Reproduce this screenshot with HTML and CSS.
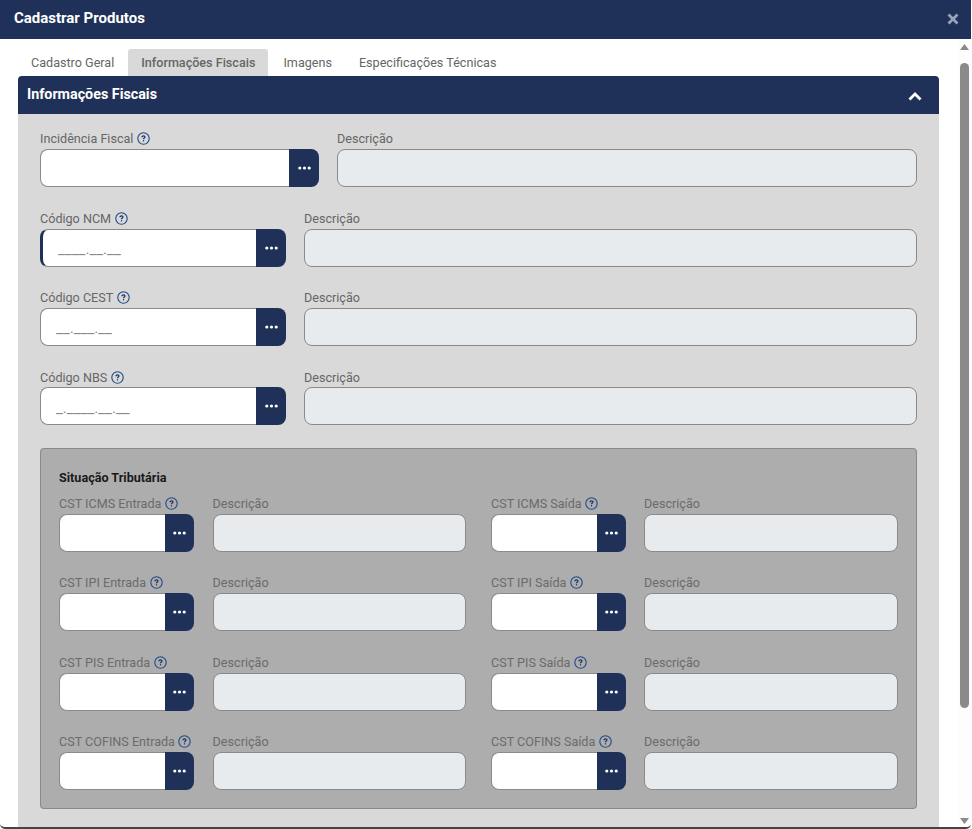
FILE: index.html
```html
<!DOCTYPE html>
<html lang="pt-BR">
<head>
<meta charset="utf-8">
<title>Cadastrar Produtos</title>
<link rel="stylesheet" href="styles.css">
</head>
<body>
<svg class="defs" width="0" height="0" aria-hidden="true">
  <symbol id="help" viewBox="0 0 13 13">
    <circle cx="6.5" cy="6.5" r="5.7" fill="none" stroke="#1f4a8a" stroke-width="1.1"/>
    <path d="M5 5.2C5 4.4 5.6 3.9 6.5 3.9C7.4 3.9 8 4.4 8 5.1C8 6.1 6.5 6.1 6.5 7.3" fill="none" stroke="#1f3158" stroke-width="1.2"/>
    <rect x="5.9" y="8.2" width="1.2" height="1.2" fill="#1f3158"/>
  </symbol>
  <symbol id="dots" viewBox="0 0 13 4">
    <circle cx="1.8" cy="2" r="1.6" fill="#fff"/>
    <circle cx="6.5" cy="2" r="1.6" fill="#fff"/>
    <circle cx="11.2" cy="2" r="1.6" fill="#fff"/>
  </symbol>
</svg>
<div class="modal">
  <header class="modal-head">
    <h1 class="modal-title">Cadastrar Produtos</h1>
    <svg class="close" width="12" height="12" viewBox="0 0 12 12"><path d="M1.5 1.5L10.5 10.5M10.5 1.5L1.5 10.5" stroke="#98a2b8" stroke-width="2.8"/></svg>
  </header>
  <div class="modal-body">
    <div class="content">
      <nav class="tabs">
        <span class="tab">Cadastro Geral</span>
        <span class="tab tab-active">Informações Fiscais</span>
        <span class="tab">Imagens</span>
        <span class="tab">Especificações Técnicas</span>
      </nav>
      <section class="panel">
        <div class="panel-head">
          <h2 class="panel-title">Informações Fiscais</h2>
          <svg class="chevron" width="14" height="9" viewBox="0 0 14 9"><path d="M1.5 7.5L7 2L12.5 7.5" fill="none" stroke="#fff" stroke-width="2.8"/></svg>
        </div>
        <div class="panel-body">
          <div class="row row-first">
            <div class="field code"><label class="label">Incidência Fiscal<svg class="help"><use href="#help"/></svg></label><div class="lookup"><span class="input"></span><span class="btn"><svg class="dots"><use href="#dots"/></svg></span></div></div>
            <div class="field desc"><label class="label">Descrição</label><span class="ro"></span></div>
          </div>
          <div class="row">
            <div class="field code"><label class="label">Código NCM<svg class="help"><use href="#help"/></svg></label><div class="lookup"><span class="input input-focus"><span class="mask mask-ncm">____.__.__</span></span><span class="btn"><svg class="dots"><use href="#dots"/></svg></span></div></div>
            <div class="field desc"><label class="label">Descrição</label><span class="ro"></span></div>
          </div>
          <div class="row">
            <div class="field code"><label class="label">Código CEST<svg class="help"><use href="#help"/></svg></label><div class="lookup"><span class="input"><span class="mask">__.___.__</span></span><span class="btn"><svg class="dots"><use href="#dots"/></svg></span></div></div>
            <div class="field desc"><label class="label">Descrição</label><span class="ro"></span></div>
          </div>
          <div class="row">
            <div class="field code"><label class="label">Código NBS<svg class="help"><use href="#help"/></svg></label><div class="lookup"><span class="input"><span class="mask">_.____.__.__</span></span><span class="btn"><svg class="dots"><use href="#dots"/></svg></span></div></div>
            <div class="field desc"><label class="label">Descrição</label><span class="ro"></span></div>
          </div>
          <fieldset class="group">
            <h3 class="group-title">Situação Tributária</h3>
            <div class="group-grid">
              <div class="field"><label class="label">CST ICMS Entrada<svg class="help"><use href="#help"/></svg></label><div class="lookup"><span class="input"></span><span class="btn"><svg class="dots"><use href="#dots"/></svg></span></div></div>
              <div class="field"><label class="label">Descrição</label><span class="ro"></span></div>
              <div class="field"><label class="label">CST ICMS Saída<svg class="help"><use href="#help"/></svg></label><div class="lookup"><span class="input"></span><span class="btn"><svg class="dots"><use href="#dots"/></svg></span></div></div>
              <div class="field"><label class="label">Descrição</label><span class="ro"></span></div>

              <div class="field"><label class="label">CST IPI Entrada<svg class="help"><use href="#help"/></svg></label><div class="lookup"><span class="input"></span><span class="btn"><svg class="dots"><use href="#dots"/></svg></span></div></div>
              <div class="field"><label class="label">Descrição</label><span class="ro"></span></div>
              <div class="field"><label class="label">CST IPI Saída<svg class="help"><use href="#help"/></svg></label><div class="lookup"><span class="input"></span><span class="btn"><svg class="dots"><use href="#dots"/></svg></span></div></div>
              <div class="field"><label class="label">Descrição</label><span class="ro"></span></div>

              <div class="field"><label class="label">CST PIS Entrada<svg class="help"><use href="#help"/></svg></label><div class="lookup"><span class="input"></span><span class="btn"><svg class="dots"><use href="#dots"/></svg></span></div></div>
              <div class="field"><label class="label">Descrição</label><span class="ro"></span></div>
              <div class="field"><label class="label">CST PIS Saída<svg class="help"><use href="#help"/></svg></label><div class="lookup"><span class="input"></span><span class="btn"><svg class="dots"><use href="#dots"/></svg></span></div></div>
              <div class="field"><label class="label">Descrição</label><span class="ro"></span></div>

              <div class="field"><label class="label">CST COFINS Entrada<svg class="help"><use href="#help"/></svg></label><div class="lookup"><span class="input"></span><span class="btn"><svg class="dots"><use href="#dots"/></svg></span></div></div>
              <div class="field"><label class="label">Descrição</label><span class="ro"></span></div>
              <div class="field"><label class="label">CST COFINS Saída<svg class="help"><use href="#help"/></svg></label><div class="lookup"><span class="input"></span><span class="btn"><svg class="dots"><use href="#dots"/></svg></span></div></div>
              <div class="field"><label class="label">Descrição</label><span class="ro"></span></div>
            </div>
          </fieldset>
        </div>
      </section>
    </div>
    <div class="scrollbar">
      <svg class="arrow" width="9" height="6" viewBox="0 0 9 6"><path d="M4.5 0L9 6H0Z" fill="#8a8a8a"/></svg>
      <div class="thumb"></div>
      <svg class="arrow arrow-down" width="9" height="6" viewBox="0 0 9 6"><path d="M0 0H9L4.5 6Z" fill="#8a8a8a"/></svg>
    </div>
  </div>
</div>
</body>
</html>
```
FILE: styles.css
```css
* { box-sizing: border-box; }
html, body { margin: 0; height: 100%; overflow: hidden; background: #fff; }
body { font-family: Roboto, "Liberation Sans", sans-serif; font-size: 12.6px; color: #666; }
.defs { position: absolute; }
.modal { width: 971px; height: 829px; display: flex; flex-direction: column; background: #fff; border-bottom: 2px solid #444; border-radius: 0 0 5px 5px; overflow: hidden; }
.modal-head { flex: none; height: 39px; background: #1f3158; display: flex; align-items: center; justify-content: space-between; padding: 0 12px 3px 14px; }
.modal-title { margin: 0; font-size: 15px; font-weight: 700; color: #fff; }
.close { flex: none; margin-top: 2px; }
.modal-body { flex: 1; min-height: 0; display: flex; }
.content { flex: 1; min-width: 0; padding: 10px 18px 0; overflow: hidden; }
.tabs { height: 27px; display: flex; gap: 1px; }
.tab { padding: 5px 13px 0; font-size: 12.6px; line-height: 17px; color: #666; }
.tab-active { background: #d9d9d9; border-radius: 3px 3px 0 0; font-weight: 500; }
.tab-active + .tab { margin-left: 1px; }
.panel { width: 921px; }
.panel-head { height: 38px; background: #1f3158; border-radius: 4px 4px 0 0; display: flex; align-items: center; justify-content: space-between; padding: 0 17px 2px 9px; }
.panel-title { margin: 0; font-size: 14.3px; font-weight: 700; color: #fff; }
.chevron { margin-top: 5px; }
.panel-body { background: #d9d9d9; padding: 13.8px 22px 30px; }
.row { display: flex; gap: 18px; margin-top: 20px; }
.row-first { margin-top: 0; }
.row .code { flex: none; width: 246px; }
.row-first .code { width: 279px; }
.row .desc { flex: 1; }
.field { min-width: 0; }
.label { display: flex; align-items: center; height: 21.4px; padding-top: 1px; font-size: 12.6px; color: #666; white-space: nowrap; }
.help { flex: none; width: 13px; height: 13px; margin-left: 3.5px; }
.lookup { display: flex; height: 38px; }
.input { flex: 1; min-width: 0; background: #fff; border: 1px solid #8a8a8a; border-right: 0; border-radius: 8px 0 0 8px; display: flex; align-items: center; padding: 3px 0 0 15px; }
.input-focus { border-left: 3px solid #1f3158; }
.mask { font-size: 15.2px; line-height: 18px; color: #8a8a8a; }
.btn { flex: none; width: 30px; background: #1f3158; border-radius: 0 8px 8px 0; display: flex; align-items: center; justify-content: center; }
.dots { width: 13px; height: 4px; }
.ro { display: block; height: 38px; background: #e8ebee; border: 1px solid #8a8a8a; border-radius: 8px; }
.group { margin: 23px 0 0; padding: 19.5px 18px 18px; min-width: 0; background: #adadad; border: 1px solid #8a8a8a; border-radius: 4px; }
.group-title { margin: 0 0 6.5px; font-size: 12.6px; line-height: 17px; font-weight: 700; color: #1a1a1a; }
.group-grid { display: grid; grid-template-columns: 135px 254px 135px 254px; column-gap: 18px; row-gap: 20px; }
.group-grid .btn { width: 29.4px; }
.group-grid .field:nth-child(4n+2) { margin-left: 0.6px; }
.group-grid .field:nth-child(4n+3) { margin-left: 7px; margin-right: -7px; }
.group-grid .field:nth-child(4n) { margin-left: 7px; margin-right: -7px; }
.group-grid .label { color: #6b6b6b; }
.scrollbar { flex: none; width: 14px; background: #fdfdfd; display: flex; flex-direction: column; align-items: center; padding-top: 5px; }
.arrow { flex: none; }
.thumb { flex: none; width: 9px; height: 645px; margin-top: 13px; border-radius: 5px; background: #8a8a8a; }
.arrow-down { margin-top: auto; margin-bottom: 3px; }
```
